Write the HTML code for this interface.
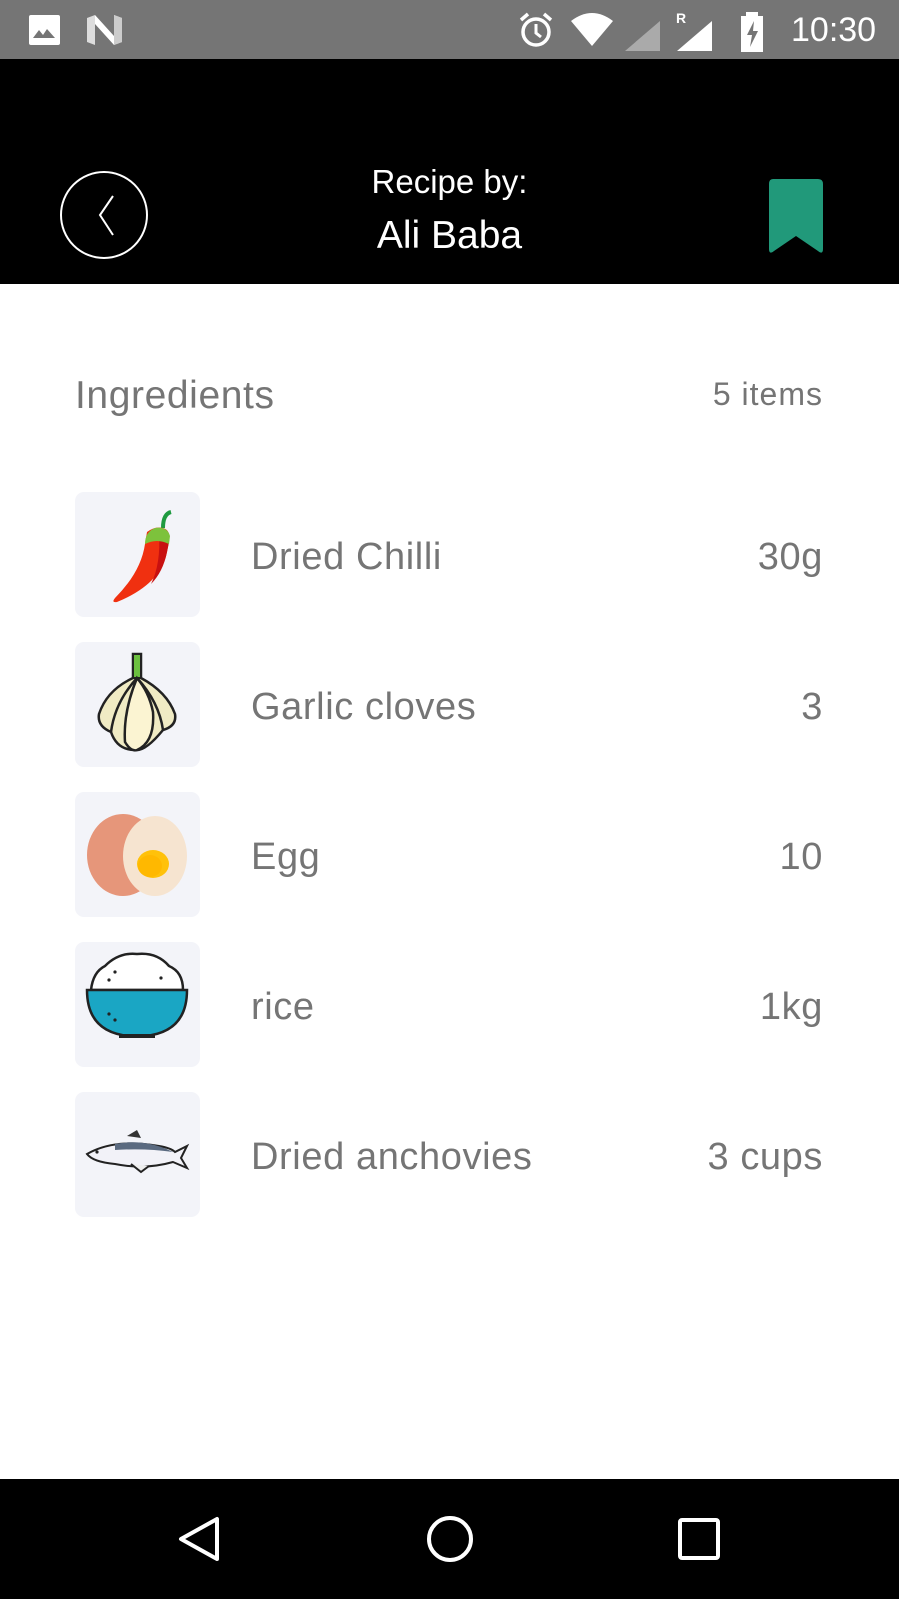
<!DOCTYPE html>
<html><head><meta charset="utf-8">
<style>
*{margin:0;padding:0;box-sizing:border-box}
html,body{width:899px;height:1599px;overflow:hidden;background:#fff;font-family:"Liberation Sans",sans-serif}
.abs{position:absolute}
.status{left:0;top:0;width:899px;height:59px;background:#757575}
.header{left:0;top:59px;width:899px;height:225px;background:#000}
.nav{left:0;top:1479px;width:899px;height:120px;background:#000}
.gray{color:#757575}
.card{position:absolute;left:75px;width:125px;height:125px;background:#f3f4f9;border-radius:9px}
.name{position:absolute;left:251px;font-size:38px;color:#757575;line-height:38px;letter-spacing:0.6px;white-space:nowrap}
.qty{position:absolute;right:76px;font-size:38px;color:#757575;line-height:38px;text-align:right;letter-spacing:0.6px;white-space:nowrap}
</style></head><body>
<div class="abs status">
 <svg class="abs" style="left:28px;top:14px" width="34" height="32" viewBox="0 0 34 32"><rect x="1" y="1" width="31" height="30" rx="2" fill="#fff"/><path d="M5 24 L11 16 L15 21 L19 15 L27 24Z" fill="#757575"/></svg>
 <svg class="abs" style="left:86px;top:14px" width="38" height="32" viewBox="0 0 38 32"><path d="M1 4 L9 1 L9 31 L1 28Z" fill="#ddd"/><path d="M9 1 L28 22 L28 1 L36 4 L36 28 L28 31 L9 10Z" fill="#fff"/><path d="M28 1 L36 4 L36 28 L28 31Z" fill="#ccc"/></svg>
 <svg class="abs" style="left:518px;top:12px" width="36" height="36" viewBox="0 0 36 36"><circle cx="18" cy="20" r="13" fill="none" stroke="#fff" stroke-width="3.5"/><path d="M18 12 V21 L23 25" fill="none" stroke="#fff" stroke-width="3"/><path d="M3 8 L10 2 M33 8 L26 2" stroke="#fff" stroke-width="3.5"/></svg>
 <svg class="abs" style="left:570px;top:13px" width="44" height="34" viewBox="0 0 44 34"><path d="M1 8 Q22 -8 43 8 L22 33Z" fill="#fff"/></svg>
 <svg class="abs" style="left:625px;top:21px" width="36" height="30" viewBox="0 0 36 30"><path d="M35 0 V30 H0Z" fill="#aaa"/></svg>
 <div class="abs" style="left:676px;top:10px;color:#fff;font-size:14px;font-weight:bold">R</div>
 <svg class="abs" style="left:677px;top:21px" width="36" height="30" viewBox="0 0 36 30"><path d="M35 0 V30 H0Z" fill="#fff"/></svg>
 <svg class="abs" style="left:738px;top:12px" width="28" height="40" viewBox="0 0 28 40"><rect x="8" y="0" width="12" height="5" fill="#fff"/><rect x="3" y="4" width="22" height="36" fill="#fff"/><path d="M16 9 L9 23 H14 L12 35 L20 19 H15Z" fill="#757575"/></svg>
 <div class="abs" style="left:791px;top:11px;color:#fff;font-size:34px">10:30</div>
</div>
<div class="abs header">
 <svg class="abs" style="left:59px;top:111px" width="90" height="90" viewBox="0 0 90 90"><circle cx="45" cy="45" r="43" fill="none" stroke="#fff" stroke-width="2"/><path d="M54 26 L41 45 L54 65" fill="none" stroke="#fff" stroke-width="2"/></svg>
 <div class="abs" style="left:0;width:899px;top:106px;text-align:center;color:#fff;font-size:33px;line-height:33px">Recipe by:</div>
 <div class="abs" style="left:0;width:899px;top:157px;text-align:center;color:#fff;font-size:39px;line-height:39px">Ali Baba</div>
 <svg class="abs" style="left:768px;top:120px" width="56" height="76" viewBox="0 0 56 76"><path d="M5 0 H50 Q55 0 55 5 V70 Q55 76 50 72 L28 57 L6 72 Q1 76 1 70 V5 Q1 0 5 0Z" fill="#21997a"/></svg>
</div>

<div class="abs gray" style="left:75px;top:376px;font-size:39px;line-height:39px;letter-spacing:0.6px">Ingredients</div>
<div class="abs gray" style="right:76px;top:378px;font-size:32px;line-height:32px;letter-spacing:1px">5 items</div>

<div class="card" style="top:492px"><svg width="125" height="125" viewBox="0 0 125 125"><path d="M88 36 Q88 22 96 20" fill="none" stroke="#1e9a40" stroke-width="4"/><path d="M72 40 Q80 34 88 36 Q96 38 94 50 L92 60 Q86 92 42 110 Q36 111 40 106 Q66 80 70 52Z" fill="#f03010"/><path d="M84 40 L94 50 L92 60 Q88 80 76 92 Q86 72 84 40Z" fill="#c81010"/><path d="M70 52 Q70 40 80 36 Q92 34 95 44 L94 52 Q82 46 70 52Z" fill="#7dc23c"/></svg></div>
<div class="name" style="top:538px">Dried Chilli</div><div class="qty" style="top:538px">30g</div>

<div class="card" style="top:642px"><svg width="125" height="125" viewBox="0 0 125 125"><path d="M58 12 H66 L66 36 Q92 50 100 72 Q102 84 88 88 Q70 110 60 108 Q42 108 36 90 Q22 84 24 72 Q32 48 58 36Z" fill="#f0ebc4" stroke="#222" stroke-width="2.5"/><path d="M58 12 H66 V36 H58Z" fill="#6cc040" stroke="#222" stroke-width="2"/><path d="M62 36 Q40 60 36 90 M62 36 Q84 60 88 88" fill="none" stroke="#222" stroke-width="2.5"/><path d="M62 36 Q48 70 50 100 Q56 110 62 108 Q80 100 78 70 Q74 50 62 36Z" fill="#fbf4d2" stroke="#222" stroke-width="2.5"/></svg></div>
<div class="name" style="top:688px">Garlic cloves</div><div class="qty" style="top:688px">3</div>

<div class="card" style="top:792px"><svg width="125" height="125" viewBox="0 0 125 125"><ellipse cx="48" cy="63" rx="36" ry="41" fill="#e6967a"/><ellipse cx="80" cy="64" rx="32" ry="40" fill="#f6e4d0"/><ellipse cx="78" cy="72" rx="16" ry="14" fill="#ffc10a"/><ellipse cx="75" cy="74" rx="12" ry="11" fill="#ffb800"/></svg></div>
<div class="name" style="top:838px">Egg</div><div class="qty" style="top:838px">10</div>

<div class="card" style="top:942px"><svg width="125" height="125" viewBox="0 0 125 125"><path d="M16 48 Q18 30 30 24 Q44 10 62 12 Q82 10 94 24 Q108 30 108 48Z" fill="#fff" stroke="#222" stroke-width="2.5"/><path d="M12 48 H112 Q112 90 70 94 H54 Q12 90 12 48Z" fill="#1aa6c4" stroke="#222" stroke-width="2.5"/><path d="M44 94 H80" stroke="#222" stroke-width="4"/><circle cx="40" cy="30" r="1.6" fill="#222"/><circle cx="34" cy="38" r="1.6" fill="#222"/><circle cx="86" cy="36" r="1.6" fill="#222"/><circle cx="34" cy="72" r="1.6" fill="#222"/><circle cx="40" cy="78" r="1.6" fill="#222"/></svg></div>
<div class="name" style="top:988px">rice</div><div class="qty" style="top:988px">1kg</div>

<div class="card" style="top:1092px"><svg width="125" height="125" viewBox="0 0 125 125"><path d="M52 44 L62 38 L66 46Z" fill="#333"/><path d="M12 62 Q40 46 84 54 Q96 56 100 60 L112 54 L106 66 L112 76 L98 70 Q70 78 40 72 Q18 70 12 62Z" fill="#f2f2f8" stroke="#222" stroke-width="2"/><path d="M40 52 Q70 46 98 60 Q70 56 40 58Z" fill="#5a6a80"/><path d="M56 72 L66 80 L74 74" fill="#eee" stroke="#222" stroke-width="2"/><circle cx="22" cy="60" r="1.6" fill="#222"/></svg></div>
<div class="name" style="top:1138px">Dried anchovies</div><div class="qty" style="top:1138px">3 cups</div>

<div class="abs nav">
 <svg class="abs" style="left:176px;top:35px" width="50" height="50" viewBox="0 0 50 50"><path d="M41 5 V45 L5 25Z" fill="none" stroke="#fff" stroke-width="4" stroke-linejoin="round"/></svg>
 <svg class="abs" style="left:425px;top:35px" width="50" height="50" viewBox="0 0 50 50"><circle cx="25" cy="25" r="21" fill="none" stroke="#fff" stroke-width="4"/></svg>
 <svg class="abs" style="left:676px;top:37px" width="46" height="46" viewBox="0 0 46 46"><rect x="4" y="4" width="38" height="38" rx="2" fill="none" stroke="#fff" stroke-width="4"/></svg>
</div>
</body></html>
